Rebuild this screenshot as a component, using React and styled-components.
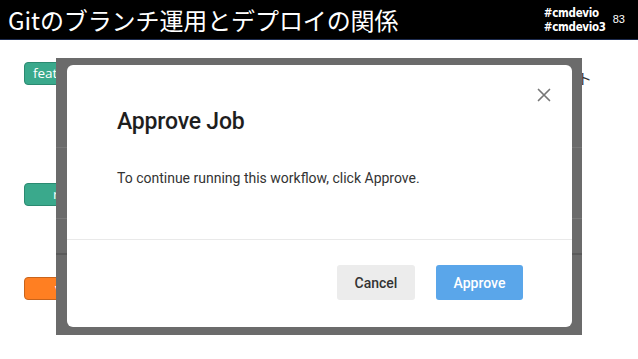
import React from "react";
import styled, { createGlobalStyle } from "styled-components";

const Global = createGlobalStyle`
  html, body { margin: 0; padding: 0; background: #fff; }
  body { width: 638px; height: 359px; overflow: hidden; font-family: Roboto, "Noto Sans", sans-serif; }
`;

const Page = styled.div`
  width: 638px;
  height: 359px;
  display: flex;
  flex-direction: column;
  background: #fff;
`;

const Header = styled.header`
  height: 39px;
  background: #000;
  border-bottom: 1px solid #1c2a4d;
  display: flex;
  align-items: center;
  padding: 0 13px 0 8px;
  color: #fff;
`;

const Title = styled.h1`
  margin: 0;
  flex: 1;
  font-family: "Noto Sans CJK JP", "Noto Sans", sans-serif;
  font-weight: 400;
  font-size: 24px;
  line-height: 1;
  letter-spacing: -0.1px;
  padding-top: 1px;
`;

const Tags = styled.div`
  display: flex;
  flex-direction: column;
  font-family: "DejaVu Sans Condensed", "DejaVu Sans", sans-serif;
  font-stretch: condensed;
  font-weight: 700;
  font-size: 11.5px;
  line-height: 14px;
  letter-spacing: -0.3px;
`;

const PageNo = styled.span`
  margin-left: 7px;
  font-family: "Liberation Sans", sans-serif;
  font-size: 11px;
  margin-top: -1px;
`;

const Slide = styled.main`
  position: relative;
  flex: 1;
  display: flex;
  flex-direction: column;
`;

const Row = styled.div`
  height: ${(p) => p.$h}px;
  padding-top: ${(p) => p.$pt}px;
  box-sizing: border-box;
  display: flex;
  align-items: flex-start;
  justify-content: space-between;
  padding-left: 24px;
  padding-right: 46px;
`;

const Badge = styled.span`
  width: 130px;
  height: 23px;
  box-sizing: border-box;
  border-radius: 4px;
  border: 1px solid ${(p) => p.$edge};
  background: ${(p) => p.$bg};
  color: #fff;
  font-family: "Open Sans", "Noto Sans", sans-serif;
  font-size: 13.5px;
  line-height: 21px;
  padding-left: ${(p) => p.$pl}px;
  overflow: hidden;
  white-space: nowrap;
`;

const Mark = styled.span`
  font-family: "Noto Sans CJK JP", sans-serif;
  font-size: 15px;
  color: #333;
  line-height: 1;
  margin-top: 8px;
`;

const Overlay = styled.div`
  position: absolute;
  left: 56px;
  top: 18px;
  width: 526px;
  height: 277px;
  box-sizing: border-box;
  padding: 7px 10px 8px 11px;
  background-color: #6b6b6b;
  background-image:
    linear-gradient(#787878, #787878),
    linear-gradient(#7a7a7a, #7a7a7a),
    linear-gradient(#5a5a5a, #5a5a5a);
  background-size: 100% 1px, 100% 1px, 100% 2px;
  background-position: 0 89px, 0 160px, 0 195px;
  background-repeat: no-repeat;
  display: flex;
`;

const Modal = styled.div`
  position: relative;
  flex: 1;
  background: #fff;
  border-radius: 6px;
  display: flex;
  flex-direction: column;
`;

const Close = styled.button`
  position: absolute;
  right: 19px;
  top: 21px;
  width: 18px;
  height: 18px;
  padding: 0;
  border: 0;
  background: transparent;
  display: flex;
  align-items: center;
  justify-content: center;
`;

const Body = styled.div`
  padding: 44px 50px 0;
  height: 175px;
  box-sizing: border-box;
  border-bottom: 1px solid #e9e9e9;
`;

const ModalTitle = styled.h2`
  margin: 0;
  font-family: Roboto, sans-serif;
  font-weight: 500;
  font-size: 23px;
  line-height: 26px;
  color: #1e1e1e;
  letter-spacing: -0.2px;
`;

const Text = styled.p`
  margin: 35px 0 0;
  font-family: Roboto, sans-serif;
  font-size: 14px;
  line-height: 17px;
  color: #333;
`;

const Footer = styled.div`
  display: flex;
  justify-content: flex-end;
  gap: 21px;
  padding: 25px 49px 0 0;
`;

const Button = styled.button`
  height: 35px;
  width: ${(p) => p.$w}px;
  border: 0;
  border-radius: 3px;
  background: ${(p) => (p.$primary ? "#5aa6ea" : "#ececec")};
  color: ${(p) => (p.$primary ? "#fff" : "#333")};
  font-family: Roboto, sans-serif;
  font-weight: 500;
  font-size: 14px;
  padding: 0;
`;

export default function App() {
  return (
    <>
      <Global />
      <Page>
        <Header>
          <Title>Gitのブランチ運用とデプロイの関係</Title>
          <Tags>
            <span>#cmdevio</span>
            <span>#cmdevio3</span>
          </Tags>
          <PageNo>83</PageNo>
        </Header>
        <Slide>
          <Row $h={108} $pt={22}>
            <Badge $bg="#3aa98c" $edge="#2b8a71" $pl={8}>feature/approve</Badge>
            <Mark>ト</Mark>
          </Row>
          <Row $h={71} $pt={35}>
            <Badge $bg="#3aa98c" $edge="#2b8a71" $pl={28}>release</Badge>
          </Row>
          <Row $h={35} $pt={0} />
          <Row $h={105} $pt={23}>
            <Badge $bg="#ff7f22" $edge="#c8641c" $pl={30}>v1.0.0</Badge>
          </Row>
          <Overlay>
            <Modal>
              <Close aria-label="close">
                <svg width="14" height="14" viewBox="0 0 14 14">
                  <path d="M1.5 1.5L12.5 12.5M12.5 1.5L1.5 12.5" stroke="#777" strokeWidth="1.7" strokeLinecap="round" />
                </svg>
              </Close>
              <Body>
                <ModalTitle>Approve Job</ModalTitle>
                <Text>To continue running this workflow, click Approve.</Text>
              </Body>
              <Footer>
                <Button $w={78}>Cancel</Button>
                <Button $w={87} $primary>Approve</Button>
              </Footer>
            </Modal>
          </Overlay>
        </Slide>
      </Page>
    </>
  );
}
